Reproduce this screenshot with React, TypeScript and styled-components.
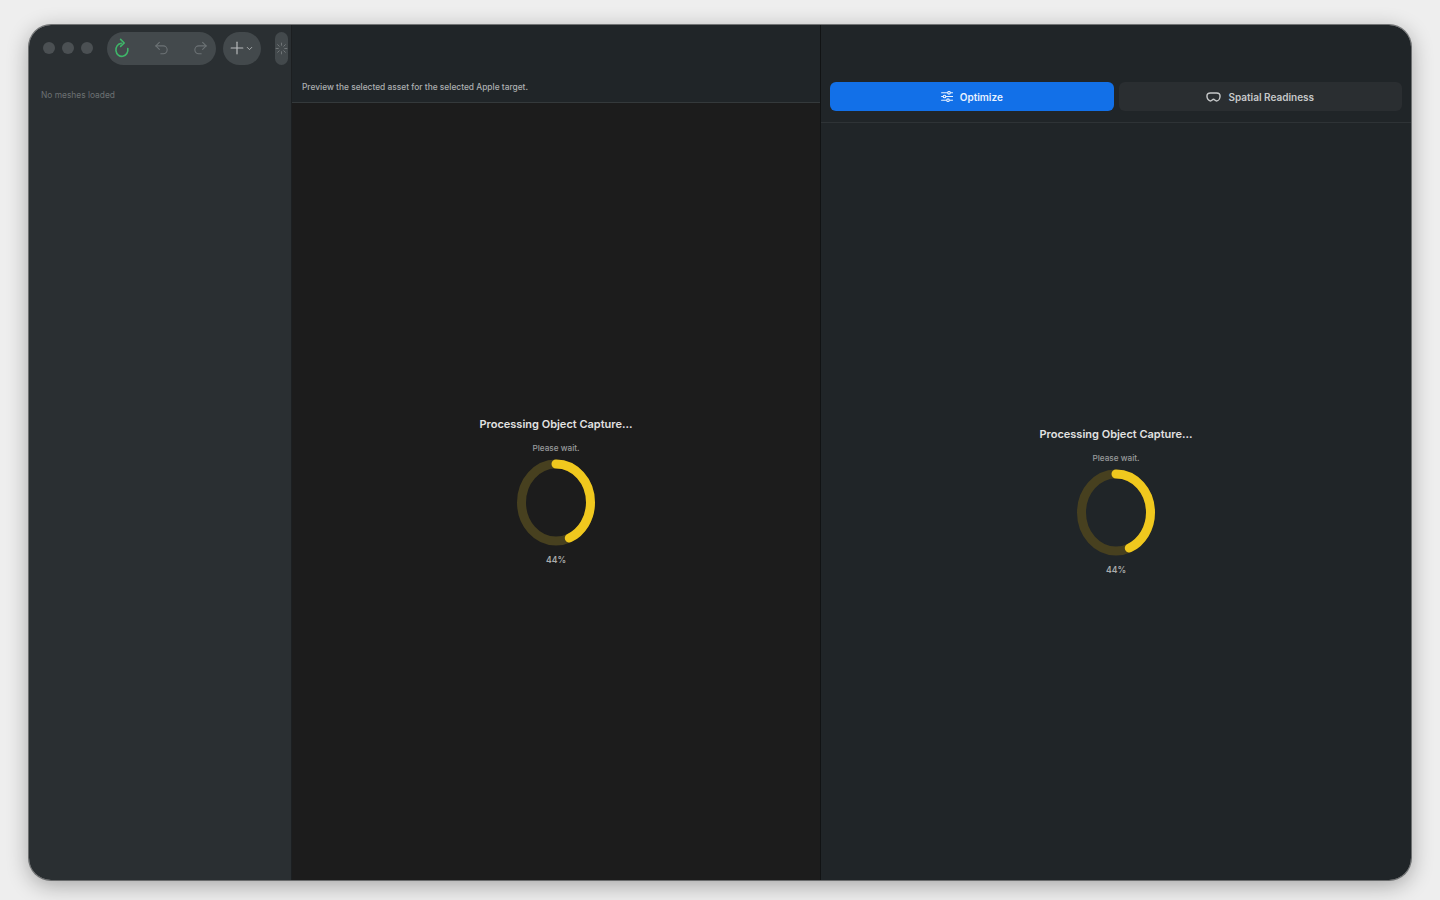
import React from "react";
import styled, { createGlobalStyle } from "styled-components";
import { ChevronDown, Loader, Plus, Redo2, Undo2 } from "lucide-react";

const Global = createGlobalStyle`
  html, body { margin: 0; height: 100%; background: #eeeeee; }
  #root { height: 100%; }
  * { box-sizing: border-box; }
`;

const Page = styled.div`
  width: 1440px;
  height: 900px;
  padding: 25px 29px 20px;
  background: #eeeeee;
  font-family: Inter, "Liberation Sans", sans-serif;
  overflow: hidden;
`;

const Window = styled.div`
  display: flex;
  height: 100%;
  border-radius: 22px;
  overflow: hidden;
  box-shadow: 0 0 0 1px rgba(70, 72, 74, 0.7), 0 5px 22px rgba(0, 0, 0, 0.32);
`;

const Sidebar = styled.aside`
  flex: 0 0 263px;
  min-width: 0;
  overflow: hidden;
  background: #2a2f32;
  border-right: 1px solid #1c1f21;
`;

const Toolbar = styled.div`
  display: flex;
  align-items: center;
  height: 46px;
  padding-left: 14px;
`;

const Lights = styled.div`
  display: flex;
  gap: 7px;
  margin-right: 14px;
`;

const Light = styled.span`
  width: 12px;
  height: 12px;
  border-radius: 50%;
  background: #4b5053;
`;

const Pill = styled.div<{ $width: number }>`
  display: flex;
  flex: 0 0 ${(p) => p.$width}px;
  align-items: center;
  height: 33px;
  border-radius: 17px;
  background: #43494c;
`;

const HistoryPill = styled(Pill)`
  justify-content: space-between;
  padding: 0 7.5px 0 7px;
`;

const ToolSlot = styled.span<{ $dim?: boolean }>`
  display: flex;
  width: 17px;
  justify-content: center;
  color: ${(p) => (p.$dim ? "#6d7376" : "#b4b8b9")};
`;

const AddPill = styled(Pill)`
  margin-left: 7px;
  padding-left: 4px;
  color: #b9bcbd;

  & > svg + svg {
    margin-left: -2px;
  }
`;

const SpinnerPill = styled(Pill)`
  justify-content: center;
  margin-left: 14px;
  color: #777c7e;
  overflow: hidden;
`;

const EmptyNote = styled.p`
  margin: 18px 0 0 12px;
  font-size: 8.4px;
  line-height: 12px;
  color: #6c7173;
`;

const PreviewPane = styled.main`
  display: flex;
  flex: 0 0 529px;
  flex-direction: column;
  background: #1c1c1c;
  border-right: 1px solid #111314;
`;

const PreviewHeader = styled.header`
  display: flex;
  flex: 0 0 78px;
  align-items: flex-end;
  padding: 0 10px 9px;
  background: #202528;
  border-bottom: 1px solid #34393b;
  font-size: 8.4px;
  font-weight: 500;
  line-height: 12px;
  color: #adb0b1;
`;

const InspectorPane = styled.section`
  display: flex;
  flex: 1;
  min-width: 0;
  flex-direction: column;
  background: #202528;
`;

const Tabs = styled.div`
  display: grid;
  flex: 0 0 98px;
  grid-template-columns: 1fr 1fr;
  gap: 5px;
  align-items: end;
  padding: 0 9px 11px;
  border-bottom: 1px solid #2e3336;
`;

const Tab = styled.button<{ $active?: boolean }>`
  display: flex;
  align-items: center;
  justify-content: center;
  gap: 7px;
  height: 29px;
  padding: 0;
  border: 0;
  border-radius: 6px;
  background: ${(p) => (p.$active ? "#1270e8" : "#2a2e31")};
  color: ${(p) => (p.$active ? "#e9f2ff" : "#c6c8c9")};
  font: 600 10px/14px Inter, "Liberation Sans", sans-serif;
`;

const TabLabel = styled.span`
  padding-top: 1px;
`;

const Progress = styled.div`
  display: flex;
  flex: 1;
  flex-direction: column;
  align-items: center;
  justify-content: center;
`;

const ProgressTitle = styled.h2`
  margin: 0;
  font-size: 11px;
  font-weight: 600;
  line-height: 14px;
  color: #e2e2e2;
`;

const ProgressHint = styled.p`
  margin: 12px 0 0;
  font-size: 8.2px;
  font-weight: 500;
  line-height: 11px;
  color: #999b9c;
`;

const Ring = styled.svg`
  display: block;
  margin: 5px 0 0;
`;

const Percent = styled.span`
  margin-top: 8px;
  font-size: 8.6px;
  font-weight: 600;
  line-height: 12px;
  color: #aaabab;
`;

const ringPath = "M39 5 A34.5 38.5 0 1 1 39 82 A34.5 38.5 0 1 1 39 5";

function ProgressRing({ value }: { value: number }) {
  return (
    <Ring width="78" height="87" viewBox="0 0 78 87" fill="none" strokeWidth="9">
      <path d={ringPath} stroke="#47401f" />
      <path d={ringPath} stroke="#f0c81e" strokeLinecap="round" pathLength={100} strokeDasharray={`${value} 100`} />
    </Ring>
  );
}

function CaptureProgress() {
  return (
    <Progress>
      <ProgressTitle>Processing Object Capture...</ProgressTitle>
      <ProgressHint>Please wait.</ProgressHint>
      <ProgressRing value={44} />
      <Percent>44%</Percent>
    </Progress>
  );
}

function ReloadIcon() {
  return (
    <svg width="17" height="20" viewBox="0 0 17 20" fill="none" stroke="#3fb569" strokeWidth="1.6" strokeLinecap="round" strokeLinejoin="round">
      <path d="M7.400 5.200 A6 6.600 0 1 0 13.800 10.500" />
      <path d="M6.600 1.400 L10.200 5 L6.600 8.400" />
    </svg>
  );
}

function SlidersIcon() {
  return (
    <svg width="12" height="11" viewBox="0 0 12 11" fill="none" stroke="#e9f2ff" strokeWidth="1.1" strokeLinecap="round">
      <path d="M.6 1.800h11M.6 5.500h11M.6 9.200h11" />
      <circle cx="8" cy="1.800" r="1.300" fill="#1270e8" />
      <circle cx="3.500" cy="5.500" r="1.300" fill="#1270e8" />
      <circle cx="7" cy="9.200" r="1.300" fill="#1270e8" />
    </svg>
  );
}

function HeadsetIcon() {
  return (
    <svg width="15" height="10" viewBox="0 0 16 11" fill="none" stroke="#c6c8c9" strokeWidth="1.6" strokeLinejoin="round">
      <path d="M4.600 1h6.800c2 0 3.800 1 3.800 3.400 0 2.900-1.700 5.400-3.800 5.400-1.700 0-2.200-1.800-3.400-1.800S6.300 9.800 4.600 9.800C2.500 9.800.8 7.300.8 4.400.8 2 2.600 1 4.600 1Z" />
    </svg>
  );
}

export default function App() {
  return (
    <Page>
      <Global />
      <Window>
        <Sidebar>
          <Toolbar>
            <Lights>
              <Light />
              <Light />
              <Light />
            </Lights>
            <HistoryPill $width={109}>
              <ToolSlot><ReloadIcon /></ToolSlot>
              <ToolSlot $dim><Undo2 size={18} strokeWidth={1.5} /></ToolSlot>
              <ToolSlot $dim><Redo2 size={18} strokeWidth={1.5} /></ToolSlot>
            </HistoryPill>
            <AddPill $width={38}>
              <Plus size={20} strokeWidth={1.4} />
              <ChevronDown size={9} strokeWidth={2.2} />
            </AddPill>
            <SpinnerPill $width={13}>
              <Loader size={13} strokeWidth={1.6} style={{ flex: "none" }} />
            </SpinnerPill>
          </Toolbar>
          <EmptyNote>No meshes loaded</EmptyNote>
        </Sidebar>
        <PreviewPane>
          <PreviewHeader>Preview the selected asset for the selected Apple target.</PreviewHeader>
          <CaptureProgress />
        </PreviewPane>
        <InspectorPane>
          <Tabs>
            <Tab $active>
              <SlidersIcon />
              <TabLabel>Optimize</TabLabel>
            </Tab>
            <Tab>
              <HeadsetIcon />
              <TabLabel>Spatial Readiness</TabLabel>
            </Tab>
          </Tabs>
          <CaptureProgress />
        </InspectorPane>
      </Window>
    </Page>
  );
}
